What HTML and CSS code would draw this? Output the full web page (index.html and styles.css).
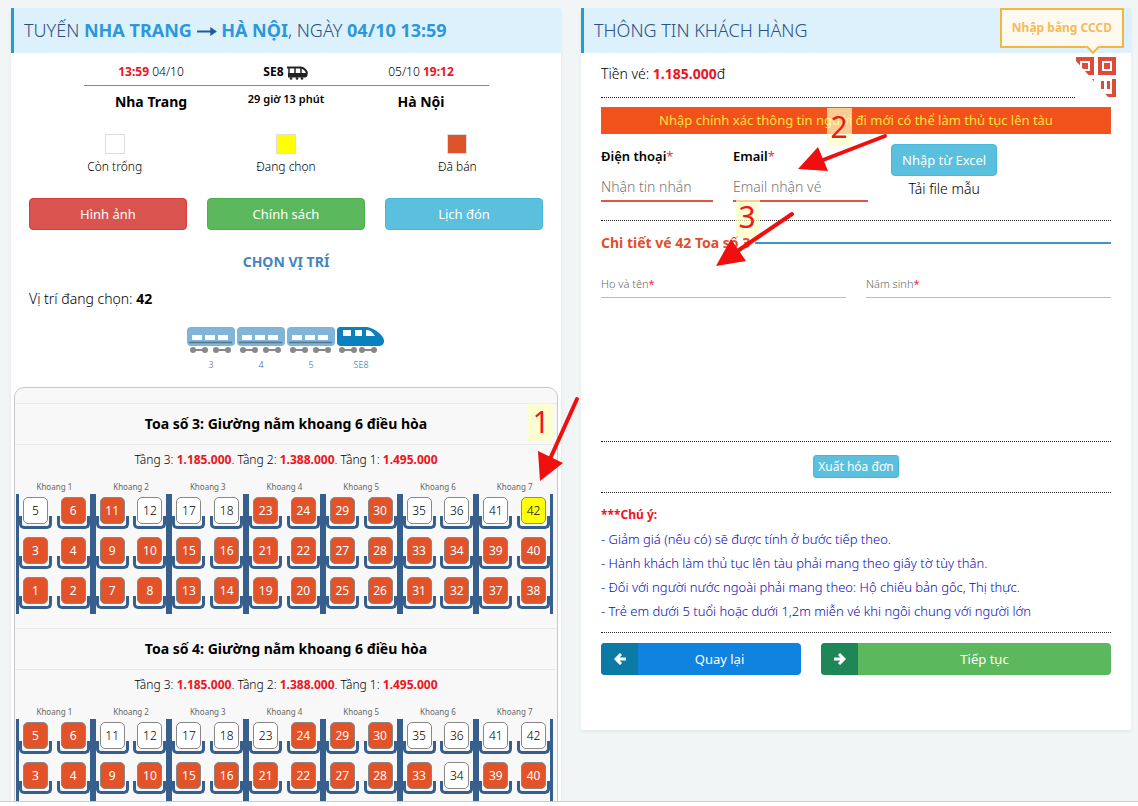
FILE: index.html
```html
<!DOCTYPE html>
<html lang="vi">
<head>
    <meta charset="UTF-8">
    <meta name="viewport" content="width=device-width, initial-scale=1.0">
    <title>Đặt vé tàu Nha Trang - Hà Nội</title>
    <link rel="stylesheet" href="styles.css">
</head>
<body>
    <main class="page">
        <section class="card">
            <h1 class="card-title">TUYẾN <b>NHA TRANG</b>
                <svg class="route-arrow" viewBox="0 0 18 10" aria-hidden="true"><path d="M0 4h12V1l6 4-6 4V6H0z"/></svg>
                <b>HÀ NỘI</b>, NGÀY <b>04/10 13:59</b></h1>

            <table class="trip">
                <tr>
                    <td><b class="red">13:59</b> 04/10</td>
                    <td><b>SE8</b>
                        <svg class="trip-icon" viewBox="0 0 22 14" aria-hidden="true">
                            <path d="M0 1.500h13.500c3 0 6.500 3.500 6.500 6" fill="none" stroke="#222" stroke-width="2"/>
                            <path d="M2 2v8M8 2v6M14 2v6" stroke="#222" stroke-width="1.500"/>
                            <path d="M1 7h19.500v2c0 1.500-1 2.500-2.500 2.500H1z" fill="#222"/>
                            <circle cx="4" cy="12.500" r="1.300" fill="#222"/><circle cx="10" cy="12.500" r="1.300" fill="#222"/><circle cx="15" cy="12.500" r="1.300" fill="#222"/>
                        </svg>
                    </td>
                    <td>05/10 <b class="red">19:12</b></td>
                </tr>
                <tr class="trip-places">
                    <th>Nha Trang</th>
                    <td class="trip-time">29 giờ 13 phút</td>
                    <th>Hà Nội</th>
                </tr>
            </table>

            <div class="legend">
                <div><span class="swatch"></span>Còn trống</div>
                <div><span class="swatch selected"></span>Đang chọn</div>
                <div><span class="swatch sold"></span>Đã bán</div>
            </div>

            <div class="actions">
                <button class="btn btn-red" type="button">Hình ảnh</button>
                <button class="btn btn-green" type="button">Chính sách</button>
                <button class="btn btn-cyan" type="button">Lịch đón</button>
            </div>

            <h2 class="choose">CHỌN VỊ TRÍ</h2>
            <p class="current">Vị trí đang chọn: <b>42</b></p>

            <svg class="symbols" aria-hidden="true">
                <symbol id="wagon" viewBox="0 0 48 28">
                    <rect width="48" height="19" rx="4" fill="#81b5d7"/>
                    <path d="M5 8h10v5H5zM18 8h10v5H18zM31 8h10v5H31z" fill="#fff"/>
                    <path d="M2 15.500h43" stroke="#54738a" stroke-width="1.500"/>
                    <path d="M6 23h12M29 23h12" stroke="#888" stroke-width="2"/>
                    <g fill="#888"><circle cx="6" cy="23" r="3"/><circle cx="18" cy="23" r="3"/><circle cx="29" cy="23" r="3"/><circle cx="41" cy="23" r="3"/></g>
                </symbol>
                <symbol id="engine" viewBox="0 0 48 28">
                    <path d="M3 0h25c8 0 19 8 19 14 0 3-2 5-6 5H4c-3 0-4-2-4-4V4c0-3 1-4 3-4z" fill="#0a80bf"/>
                    <path d="M6 3h8v6H6zM18 3h7v6h-7zM29 3c5 0 7 3 9 6h-9z" fill="#fff"/>
                    <path d="M5 23h12M25 23h12" stroke="#888" stroke-width="2"/>
                    <g fill="#888"><circle cx="5" cy="23" r="3"/><circle cx="17" cy="23" r="3"/><circle cx="25" cy="23" r="3"/><circle cx="37" cy="23" r="3"/></g>
                </symbol>
            </svg>
            <nav class="train">
                <a href="#toa-3"><svg><use href="#wagon"/></svg>3</a>
                <a href="#toa-4"><svg><use href="#wagon"/></svg>4</a>
                <a href="#toa-5"><svg><use href="#wagon"/></svg>5</a>
                <a href="#se8"><svg><use href="#engine"/></svg>SE8</a>
            </nav>

            <div class="coaches" id="coaches"></div>
        </section>

        <form class="card">
            <h1 class="card-title">THÔNG TIN KHÁCH HÀNG</h1>
            <div class="form-body">
                <div class="price-row">
                    <p class="price">Tiền vé: <b class="red">1.185.000</b>đ</p>
                    <button class="qr" type="button" aria-label="Nhập bằng CCCD">
                        <svg viewBox="0 0 40 40" aria-hidden="true">
                            <clipPath id="qr-cut"><path d="M0 4V0h40v40h-8z"/></clipPath>
                            <g clip-path="url(#qr-cut)" fill="#db4c3b">
                                <path d="M0 0h18v18H0zM4 4v10h10V4zM22 0h18v18H22zM26 4v10h10V4z" fill-rule="evenodd"/>
                                <path d="M6 6h6v6H6zM28 6h6v6h-6zM14 22h4v4h-4zM25 24h3v8h-3zM31 24h3v8h-3zM36 22h4v18H29v-3h7z"/>
                            </g>
                        </svg>
                        <span class="tip">Nhập bằng CCCD</span>
                    </button>
                </div>

                <p class="notice">Nhập chính xác thông tin người đi mới có thể làm thủ tục lên tàu</p>

                <div class="contact">
                    <div class="field phone">
                        <label for="phone">Điện thoại<i>*</i></label>
                        <input id="phone" type="tel" placeholder="Nhận tin nhắn">
                    </div>
                    <div class="field email">
                        <label for="email">Email<i>*</i></label>
                        <input id="email" type="email" placeholder="Email nhận vé">
                    </div>
                    <div class="excel">
                        <button class="btn btn-cyan" type="button">Nhập từ Excel</button>
                        <a href="#mau">Tải file mẫu</a>
                    </div>
                </div>

                <h2 class="ticket-title">Chi tiết vé 42 Toa số 3</h2>
                <div class="passenger">
                    <label>Họ và tên<i>*</i><input type="text"></label>
                    <label>Năm sinh<i>*</i><input type="text"></label>
                </div>

                <div class="invoice">
                    <button class="btn btn-cyan btn-small" type="button">Xuất hóa đơn</button>
                </div>

                <div class="notes">
                    <b class="red">***Chú ý:</b>
                    <p>- Giảm giá (nếu có) sẽ được tính ở bước tiếp theo.</p>
                    <p>- Hành khách làm thủ tục lên tàu phải mang theo giấy tờ tùy thân.</p>
                    <p>- Đối với người nước ngoài phải mang theo: Hộ chiếu bản gốc, Thị thực.</p>
                    <p>- Trẻ em dưới 5 tuổi hoặc dưới 1,2m miễn vé khi ngồi chung với người lớn</p>
                </div>

                <div class="steps">
                    <button class="step back" type="button">
                        <span class="step-icon"><svg viewBox="0 0 12 12"><path d="M7 1L2 6l5 5M2.500 6H12"/></svg></span>
                        <span class="step-text">Quay lại</span>
                    </button>
                    <button class="step next" type="submit">
                        <span class="step-icon"><svg viewBox="0 0 12 12"><path d="M5 1l5 5-5 5M9.500 6H0"/></svg></span>
                        <span class="step-text">Tiếp tục</span>
                    </button>
                </div>
            </div>
        </form>

        <!-- guide marks drawn over the page -->
        <svg class="marks" width="1138" height="500" viewBox="0 0 1138 500">
            <g fill="#ffffc4" fill-opacity=".7">
                <rect x="528" y="403" width="25" height="39"/>
                <rect x="827" y="108" width="25" height="38"/>
                <rect x="736" y="200" width="24" height="37"/>
            </g>
            <g stroke="#f00e0e" stroke-width="4" stroke-linecap="round">
                <path d="M577 399L550 459"/>
                <path d="M885 136L823 160"/>
                <path d="M792 214L736 252"/>
            </g>
            <g fill="#f00e0e">
                <path d="M538 451l25 12-23 18z"/>
                <path d="M818 147l10 24-30-2z"/>
                <path d="M731 239l15 22-30 5z"/>
            </g>
            <g class="marks-text">
                <text x="541" y="433">1</text>
                <text x="839" y="138">2</text>
                <text x="747" y="228">3</text>
            </g>
        </svg>
    </main>

    <script src="script.js"></script>
</body>
</html>
```
FILE: styles.css
```css
* {
    box-sizing: border-box;
}
body {
    margin: 0;
    background-color: #fff;
    font-family: "Noto Sans", "Open Sans", sans-serif;
    font-size: 13px;
    font-weight: 300;
    line-height: 20px;
    color: #000;
}
h1, h2, p {
    margin: 0;
}
b, th {
    font-weight: 700;
}
button, input {
    font: inherit;
}
a {
    color: inherit;
    text-decoration: none;
}
.red {
    color: #ee1320;
}

.page {
    position: relative;
    display: grid;
    grid-template-columns: 1fr 1fr;
    align-items: start;
    gap: 20px;
    height: calc(100vh - 4px);
    padding: 8px 7px 0 11px;
    overflow: hidden;
    background-color: #f1f5f6;
    border-bottom: 1px solid #c9cccc;
}
.card {
    background-color: #fff;
    border-radius: 3px;
    box-shadow: 0 2px 4px rgba(0, 0, 0, 0.06);
}
.card-title {
    height: 45px;
    padding-left: 10px;
    border-left: 3px solid #229bd8;
    background-color: #dcf1fc;
    color: #2d4f86;
    font-size: 18px;
    font-weight: 300;
    line-height: 45px;
}
.card-title b {
    color: #2c98da;
}
.route-arrow {
    width: 20px;
    height: 11px;
    fill: #1c5c9c;
}

/* trip summary */
.trip {
    width: 405px;
    margin: 7px auto 0;
    border-collapse: collapse;
    table-layout: fixed;
    text-align: center;
    font-size: 12px;
}
.trip td, .trip th {
    padding: 0;
}
.trip tr:first-child td {
    height: 25px;
    border-bottom: 1px solid #888;
}
.trip-icon {
    width: 22px;
    height: 14px;
    vertical-align: middle;
}
.trip-places {
    height: 33px;
}
.trip th {
    font-size: 14px;
}
.trip .trip-time {
    padding-bottom: 6px;
    font-size: 11px;
    font-weight: 600;
}
.legend {
    display: grid;
    grid-template-columns: repeat(3, 1fr);
    padding: 16px 18px 0;
    text-align: center;
    font-size: 12px;
}
.swatch {
    display: block;
    width: 20px;
    height: 20px;
    margin: 0 auto 3px;
    border: 1px solid #ddd;
    background-color: #fff;
}
.swatch.selected {
    background-color: #ff0;
}
.swatch.sold {
    background-color: #dd5428;
}
.actions {
    display: grid;
    grid-template-columns: repeat(3, 1fr);
    gap: 20px;
    padding: 21px 18px 0;
}
.btn {
    height: 32px;
    padding: 0 10px;
    border: 1px solid;
    border-radius: 4px;
    color: #fff;
    font-weight: 400;
    cursor: pointer;
}
.btn-red {
    background-color: #d9534f;
    border-color: #d43f3a;
}
.btn-green {
    background-color: #5cb85c;
    border-color: #4cae4c;
}
.btn-cyan {
    background-color: #5bc0de;
    border-color: #46b8da;
}
.choose {
    margin-top: 22px;
    color: #4584c0;
    font-size: 14px;
    line-height: 20px;
    text-align: center;
}
.current {
    padding: 17px 18px 18px;
    font-size: 14px;
}
.symbols {
    display: none;
}
.train {
    display: flex;
    justify-content: center;
    gap: 2px;
}
.train a {
    color: #336a94;
    font-size: 9px;
    line-height: 20px;
    text-align: center;
}
.train svg {
    display: block;
    width: 48px;
    height: 28px;
}

/* seat map */
.coaches {
    margin: 12px 3px 0;
    padding-top: 15px;
    border: 1px solid #c8c8c8;
    border-radius: 10px;
    background-color: #f8f8f8;
}
.coach-title {
    border: solid #e8e8e8;
    border-width: 1px 0;
    font-size: 14px;
    line-height: 40px;
    text-align: center;
}
.coach-price {
    font-size: 12px;
    line-height: 30px;
    text-align: center;
}
.bays {
    display: grid;
    grid-template-columns: repeat(7, 1fr);
    padding: 4px 4px 14px 1px;
}
.bay-name {
    font-size: 8px;
    font-weight: 400;
    line-height: 15px;
    color: #666;
    text-align: center;
}
.bay-seats {
    display: grid;
    grid-template-columns: 33px 33px;
    align-content: start;
    justify-content: space-between;
    min-height: 120px;
    border: solid #365f8e;
    border-width: 0 3px;
}
.berth {
    position: relative;
    height: 40px;
    padding: 3px 4px 0;
}
.berth::before {
    content: "";
    position: absolute;
    left: 0;
    right: 0;
    top: 22px;
    height: 10px;
    border: 3px solid #365f8e;
    border-top: 0;
    border-radius: 0 0 5px 5px;
}
.seat {
    position: relative;
    display: block;
    width: 25px;
    height: 27px;
    padding: 0;
    border: 1px solid #888;
    border-radius: 5px;
    background-color: #fff;
    color: #000;
    font-size: 12px;
    cursor: pointer;
}
.seat.sold {
    background-color: #e2532a;
    color: #fff;
    font-weight: 400;
}
.seat.selected {
    background-color: #ff0;
}

/* customer form */
.form-body {
    padding: 11px 20px 55px;
}
.price-row {
    position: relative;
    padding-right: 36px;
}
.price {
    height: 34px;
    border-bottom: 1px dotted #222;
    font-size: 14px;
}
.qr {
    position: absolute;
    top: -7px;
    right: -5px;
    padding: 0;
    border: 0;
    background: none;
    cursor: pointer;
}
.qr svg {
    display: block;
    width: 40px;
    height: 40px;
}
.tip {
    position: absolute;
    right: -8px;
    bottom: 49px;
    padding: 8px 10px;
    border: 2px solid #f0b840;
    background-color: #fffaf0;
    color: #f5bb5c;
    font-size: 12px;
    font-weight: 700;
    white-space: nowrap;
}
.tip::after {
    content: "";
    position: absolute;
    right: 24px;
    bottom: -6px;
    width: 8px;
    height: 8px;
    border: solid #f0b840;
    border-width: 0 2px 2px 0;
    background-color: #fffaf0;
    transform: rotate(45deg);
}
.notice {
    margin-top: 9px;
    border: 1px solid #e9573a;
    background-color: #f1511b;
    color: #ffe23c;
    font-weight: 400;
    line-height: 25px;
    text-align: center;
}
.contact {
    display: flex;
    gap: 20px;
    height: 87px;
    padding-top: 10px;
    border-bottom: 1px dotted #222;
}
.field label {
    display: block;
    line-height: 24px;
    font-weight: 600;
}
.field input {
    display: block;
    width: 100%;
    height: 34px;
    padding: 4px 0 0;
    border: 0;
    border-bottom: 2px solid #e2553f;
    background: none;
    font-size: 14px;
}
::placeholder {
    color: #777;
    opacity: 1;
}
i {
    color: #ee3340;
    font-style: normal;
    font-weight: 400;
}
.phone {
    width: 112px;
}
.email {
    width: 135px;
}
.excel {
    display: flex;
    flex-direction: column;
    align-items: center;
    gap: 3px;
    margin-left: 3px;
}
.excel a {
    font-size: 14px;
}
.ticket-title {
    display: flex;
    align-items: center;
    gap: 5px;
    padding-top: 12px;
    color: #df4f2c;
    font-size: 14px;
    line-height: 20px;
}
.ticket-title::after {
    content: "";
    flex: 1;
    height: 2px;
    background-color: #3f94cd;
}
.passenger {
    display: grid;
    grid-template-columns: 1fr 1fr;
    gap: 20px;
    height: 189px;
    padding-top: 18px;
    border-bottom: 1px dotted #222;
}
.passenger label {
    display: flex;
    height: 27px;
    border-bottom: 1px solid #bbb;
    color: #666;
    font-size: 11px;
    line-height: 26px;
}
.passenger input {
    flex: 1;
    min-width: 0;
    border: 0;
    background: none;
}
.invoice {
    padding: 13px 0 14px;
    border-bottom: 1px dotted #222;
    text-align: center;
}
.btn-small {
    display: block;
    height: 23px;
    margin: 0 auto;
    padding: 0 4px;
    border-radius: 3px;
    font-size: 12px;
    line-height: 20px;
}
.notes {
    padding: 10px 0 9px;
    border-bottom: 1px dotted #222;
    color: #0c0cb4;
    font-size: 13px;
    line-height: 24px;
}
.notes b {
    display: block;
    font-size: 12px;
}
.steps {
    display: grid;
    grid-template-columns: 200fr 290fr;
    gap: 20px;
    padding-top: 10px;
}
.step {
    display: flex;
    height: 32px;
    padding: 0;
    border: 0;
    border-radius: 4px;
    overflow: hidden;
    color: #fff;
    font-weight: 400;
    line-height: 32px;
    cursor: pointer;
}
.step-icon {
    display: flex;
    align-items: center;
    justify-content: center;
    width: 37px;
    height: 32px;
}
.step-icon svg {
    width: 12px;
    height: 12px;
    fill: none;
    stroke: #fff;
    stroke-width: 3;
}
.step-text {
    flex: 1;
}
.back {
    background-color: #1082e0;
}
.back .step-icon {
    background-color: #0b7aa5;
}
.next {
    background-color: #5cb85c;
}
.next .step-icon {
    background-color: #1f8757;
}

.marks {
    position: absolute;
    top: 0;
    left: 0;
    pointer-events: none;
}
.marks-text {
    fill: #f01818;
    font-size: 30px;
    font-weight: 400;
    text-anchor: middle;
}
```
FILE: script.js
```javascript
// seats that can still be booked in each coach
const coaches = [
    { number: 3, free: [5, 12, 17, 18, 35, 36, 41], selected: 42, order: [5, 6, 3, 4, 1, 2] },
    { number: 4, free: [11, 12, 17, 18, 23, 34, 35, 36, 41, 42], selected: null, order: [5, 6, 3, 4] }
];

function seatClass(coach, seat) {
    if (seat === coach.selected) return 'seat selected';
    return coach.free.includes(seat) ? 'seat' : 'seat sold';
}

function renderBay(coach, bay) {
    // upper berths are drawn first
    const seats = coach.order.map(n => bay * 6 + n);
    return `<div>
        <div class="bay-name">Khoang ${bay + 1}</div>
        <div class="bay-seats">
            ${seats.map(n => `<div class="berth"><button type="button" class="${seatClass(coach, n)}">${n}</button></div>`).join('')}
        </div>
    </div>`;
}

document.getElementById('coaches').innerHTML = coaches.map(coach => `
    <section id="toa-${coach.number}">
        <h2 class="coach-title">Toa số ${coach.number}: Giường nằm khoang 6 điều hòa</h2>
        <p class="coach-price">Tầng 3: <b class="red">1.185.000</b>. Tầng 2: <b class="red">1.388.000</b>. Tầng 1: <b class="red">1.495.000</b></p>
        <div class="bays">${[0, 1, 2, 3, 4, 5, 6].map(bay => renderBay(coach, bay)).join('')}</div>
    </section>`).join('');
```
